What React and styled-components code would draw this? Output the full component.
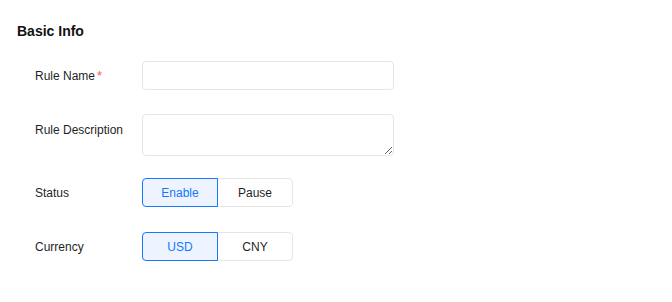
import React, { useState } from 'react';
import styled, { createGlobalStyle } from 'styled-components';

const GlobalStyle = createGlobalStyle`
  body {
    margin: 0;
    background: #fff;
    font-family: "Liberation Sans", Arial, sans-serif;
    color: #1f1f1f;
  }
`;

const Page = styled.div`
  padding: 21px 17px 0;
`;

const Heading = styled.h3`
  margin: 0 0 20px;
  font-size: 14px;
  line-height: 20px;
  font-weight: 700;
  color: #111;
`;

const Form = styled.div`
  display: flex;
  flex-direction: column;
  padding-left: 18px;
`;

const Row = styled.div`
  display: flex;
  align-items: ${props => props.top ? 'flex-start' : 'center'};
  margin-bottom: ${props => props.gap}px;
`;

const Label = styled.label`
  width: 107px;
  flex-shrink: 0;
  font-size: 12px;
  line-height: ${props => props.top ? '32px' : '20px'};
  color: #1f1f1f;
`;

const Required = styled.span`
  color: #ff5a3c;
  font-size: 13px;
  margin-left: 2px;
`;

const Input = styled.input`
  box-sizing: border-box;
  width: 252px;
  height: 29px;
  border: 1px solid #e6e6e6;
  border-radius: 4px;
  padding: 0 10px;
  font: inherit;
  font-size: 12px;
  outline: none;
`;

const TextArea = styled.textarea`
  box-sizing: border-box;
  width: 252px;
  height: 42px;
  border: 1px solid #e6e6e6;
  border-radius: 4px;
  padding: 6px 10px;
  font: inherit;
  font-size: 12px;
  outline: none;
  display: block;
`;

const Segmented = styled.div`
  display: flex;
`;

const SegButton = styled.button`
  box-sizing: border-box;
  width: 76px;
  height: 29px;
  margin-left: ${props => props.first ? '0' : '-1px'};
  border: 1px solid ${props => props.active ? '#1677ff' : '#e6e6e6'};
  background: ${props => props.active ? '#edf4ff' : '#fff'};
  color: ${props => props.active ? '#1677ff' : '#1f1f1f'};
  position: relative;
  z-index: ${props => props.active ? 1 : 0};
  font-family: inherit;
  font-size: 12px;
  cursor: pointer;
  padding: 0;
  border-radius: ${props => props.first ? '4px 0 0 4px' : '0 4px 4px 0'};
`;

function Toggle({ options, value, onChange }) {
  return (
    <Segmented>
      {options.map((opt, i) => (
        <SegButton
          key={opt}
          first={i === 0}
          active={value === opt}
          onClick={() => onChange(opt)}
        >
          {opt}
        </SegButton>
      ))}
    </Segmented>
  );
}

export default function App() {
  const [status, setStatus] = useState('Enable');
  const [currency, setCurrency] = useState('USD');

  return (
    <>
      <GlobalStyle />
      <Page>
        <Heading>Basic Info</Heading>
        <Form>
          <Row gap={24}>
            <Label>Rule Name<Required>*</Required></Label>
            <Input />
          </Row>
          <Row top gap={22}>
            <Label top>Rule Description</Label>
            <TextArea />
          </Row>
          <Row gap={25}>
            <Label>Status</Label>
            <Toggle options={['Enable', 'Pause']} value={status} onChange={setStatus} />
          </Row>
          <Row gap={0}>
            <Label>Currency</Label>
            <Toggle options={['USD', 'CNY']} value={currency} onChange={setCurrency} />
          </Row>
        </Form>
      </Page>
    </>
  );
}
